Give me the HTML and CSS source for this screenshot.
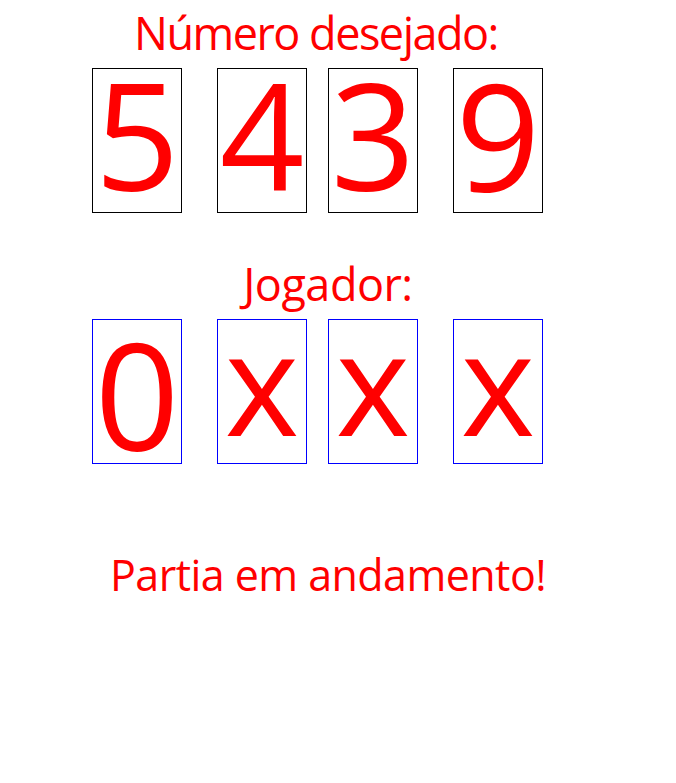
FILE: index.html
```html
<!DOCTYPE html>
<html lang="pt">
<head>
<meta charset="utf-8">
<title>Jogo</title>
<link rel="stylesheet" href="styles.css">
</head>
<body>
<main class="page">
  <h1 class="label label-target">Número desejado:</h1>
  <div class="row">
    <div class="cell cell-target">5</div>
    <div class="cell cell-target gap-wide">4</div>
    <div class="cell cell-target gap-narrow">3</div>
    <div class="cell cell-target gap-wide">9</div>
  </div>
  <h2 class="label label-player">Jogador:</h2>
  <div class="row row-player">
    <div class="cell cell-player">0</div>
    <div class="cell cell-player gap-wide"><span class="blank">x</span></div>
    <div class="cell cell-player gap-narrow"><span class="blank">x</span></div>
    <div class="cell cell-player gap-wide"><span class="blank">x</span></div>
  </div>
  <p class="status">Partia em andamento!</p>
</main>
</body>
</html>
```

FILE: styles.css
```css
html, body {
  margin: 0;
  padding: 0;
  background: #ffffff;
}

.page {
  width: 676px;
  padding-top: 2px;
  font-family: "Open Sans", "Noto Sans", sans-serif;
  color: #ff0000;
}

.label {
  margin: 0;
  font-size: 45px;
  font-weight: 400;
  line-height: 62px;
  text-align: center;
}

.label-target {
  padding-right: 44px;
  letter-spacing: -1.5px;
}

.label-player {
  margin-top: 40px;
  padding-right: 20px;
  letter-spacing: -0.5px;
}

.row {
  display: flex;
  margin-top: 4px;
  padding-left: 92px;
}

.cell {
  box-sizing: border-box;
  width: 90px;
  height: 145px;
  border: 1px solid #000000;
  font-size: 148px;
  line-height: 130px;
  text-align: center;
}

.gap-wide {
  margin-left: 35px;
}

.gap-narrow {
  margin-left: 21px;
}

.cell-player {
  border-color: #0000ff;
  line-height: 147px;
}

.blank {
  display: block;
  font-size: 142px;
  line-height: 122px;
}

.status {
  margin: 83px 0 0;
  padding-right: 20px;
  font-size: 43px;
  line-height: 56px;
  letter-spacing: -0.55px;
  text-align: center;
}
```
